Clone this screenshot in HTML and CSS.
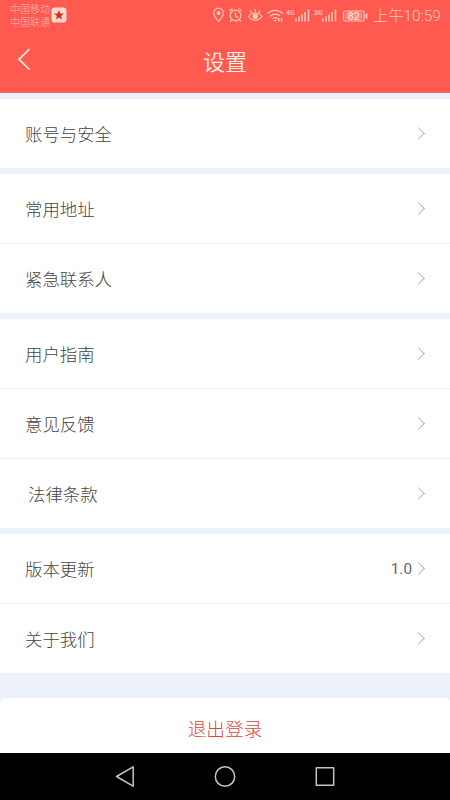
FILE: index.html
```html
<!DOCTYPE html>
<html lang="zh-CN">
<head>
<meta charset="utf-8">
<title>设置</title>
<link rel="stylesheet" href="styles.css">
</head>
<body>
<div class="screen">
  <header class="header">
    <div class="status">
      <div class="carriers"><span>中国移动</span><span>中国联通</span></div>
      <svg class="badge" width="16" height="16" viewBox="0 0 16 16"><rect x=".5" y=".5" width="15" height="15" rx="3" fill="#ffd9cc"/><path d="M8 3l1.300 3.400 3.700.2-2.900 2.300 1 3.600L8 10.500l-3.100 2 1-3.600L3 6.600l3.700-.2z" fill="#d32c20"/></svg>
      <svg class="indicators" width="156" height="20" viewBox="0 0 156 20" fill="none" stroke="#ffc9bd" stroke-width="1.2">
        <path d="M5.500 15.500C3.500 12.500.8 10.500.8 7a4.800 4.800 0 0 1 9.600 0c0 3.500-2.900 5.500-4.900 8.500z"/>
        <circle cx="5.600" cy="7" r="1.300" fill="#ffc9bd"/>
        <circle cx="22.500" cy="9.500" r="5.300"/>
        <path d="M22.500 6.500v3.500l2.500 1.500M16.500 5l3-2.500M28.500 5l-3-2.500M18.500 14l-1.500 1.700M26.500 14l1.500 1.700"/>
        <path d="M35.500 10.500c3.200-4.700 10.200-4.700 13.400 0-3.200 5-10.200 5-13.400 0zM42.200 3v3M37.200 4.500l1.500 2.500M47.200 4.500l-1.500 2.500"/>
        <circle cx="42.200" cy="10.200" r="2.200" fill="#ffc9bd"/>
        <path d="M54.500 7.500c4.300-4.300 11-4.300 15.300 0M57 10.200c3-2.900 7.300-2.900 10.200 0M59.500 12.800c1.500-1.500 3.700-1.500 5.200 0"/>
        <path d="M61.200 14.500h2.200M65.800 12v3.500M68.500 12v3.500" stroke-width="1.500"/>
        <path d="M83 13v3M86 11v5M89 9v7M92 6.500V16M95.500 4v12M110 13v3M113 11v5M116 9v7M119 6.500V16M122.500 4v12" transform="translate(0 -.5)" stroke-width="1.500"/>
        <rect x="130.600" y="5" width="20.500" height="10" rx="1.500"/>
        <path d="M153.500 7.500v5" stroke-width="1.800"/>
        <rect x="132.500" y="6.500" width="16.700" height="7" fill="#ff8a7e" stroke="none"/>
        <g class="micro" stroke="none"><text x="73" y="9">4G</text><text x="101" y="9">3G</text></g>
        <text class="charge" x="134.800" y="13.800" stroke="none">82</text>
      </svg>
      <span class="clock">上午10:59</span>
    </div>
    <div class="titlebar">
      <svg class="back" width="16" height="24" viewBox="0 0 16 24"><path d="M13.500 2L3 12.300 13.500 22.500" fill="none" stroke="#fff0e5" stroke-width="1.700"/></svg>
      <h1>设置</h1>
    </div>
  </header>
  <main class="settings">
    <section class="group">
      <div class="row"><span>账号与安全</span><i class="chevron"></i></div>
    </section>
    <section class="group">
      <div class="row"><span>常用地址</span><i class="chevron"></i></div>
      <div class="row"><span>紧急联系人</span><i class="chevron"></i></div>
    </section>
    <section class="group">
      <div class="row"><span>用户指南</span><i class="chevron"></i></div>
      <div class="row"><span>意见反馈</span><i class="chevron"></i></div>
      <div class="row indented"><span>法律条款</span><i class="chevron"></i></div>
    </section>
    <section class="group">
      <div class="row"><span>版本更新</span><span class="version">1.0</span><i class="chevron"></i></div>
      <div class="row"><span>关于我们</span><i class="chevron"></i></div>
    </section>
  </main>
  <div class="logout">退出登录</div>
  <nav class="navbar">
    <svg width="450" height="47" viewBox="0 0 450 47" fill="none" stroke="#c4c4c4" stroke-width="1.500" stroke-linejoin="round">
      <path d="M133.200 13.800v19.400L116.500 23.500z"/><circle cx="225" cy="23.500" r="9.700"/><rect x="316.300" y="14.800" width="17.400" height="17.400"/>
    </svg>
  </nav>
</div>
</body>
</html>
```
FILE: styles.css
```css
* { box-sizing: border-box; }
body {
  margin: 0;
  font-family: Roboto, "Noto Sans CJK SC", sans-serif;
  font-weight: 300;
}
.screen {
  width: 450px;
  height: 800px;
  display: flex;
  flex-direction: column;
  overflow: hidden;
  background: #ecf1fc;
}
.header {
  height: 93px;
  flex: none;
  background: #ff5a50;
  border-bottom: 1px solid #f9665e;
}
.status {
  height: 31px;
  display: flex;
  align-items: center;
  padding: 0 10px;
  color: #ffc9bd;
}
.carriers {
  display: flex;
  flex-direction: column;
  width: 41px;
  font-size: 10px;
  line-height: 13.500px;
  color: #ffb8ac;
  white-space: nowrap;
  padding-top: 1px;
}
.badge { flex: none; margin: -1px 0 0 1px; }
.indicators {
  flex: none;
  margin-left: 146px;
  margin-top: 0;
}
.micro { fill: #ffc9bd; font-size: 7px; font-weight: 500; }
.charge { fill: #fff0e9; font-size: 10.500px; font-weight: 400; }
.clock {
  margin-left: 4px;
  font-size: 15.300px;
  line-height: 20px;
  white-space: nowrap;
  font-weight: 300;
}
.titlebar {
  height: 61px;
  display: grid;
  grid-template-columns: 50px 1fr 50px;
  align-items: center;
}
.back { margin-left: 16px; margin-top: -6px; }
h1 {
  margin: 2px 0 0;
  text-align: center;
  font-size: 22px;
  line-height: 32px;
  font-weight: 350;
  color: #fff0e5;
}
.settings {
  display: flex;
  flex-direction: column;
  gap: 6px;
  padding: 6px 0 25px;
}
.group { background: #fff; }
.row {
  height: 69px;
  display: flex;
  align-items: center;
  padding: 0 24px 0 25px;
  font-size: 17.400px;
  color: #444;
}
.row + .row { height: 70px; border-top: 1px solid #eceef1; }
.row.indented { padding-left: 28px; }
.chevron {
  width: 9px;
  height: 9px;
  margin: 0 1px 0 auto;
  border: solid #b4b4b4;
  border-width: 1.300px 1.300px 0 0;
  transform: translateX(-2px) rotate(45deg);
}
.version {
  margin-left: auto;
  font-size: 15.300px;
  font-weight: 400;
  color: #666;
}
.version + .chevron { margin-left: 4px; }
.logout {
  height: 55px;
  flex: none;
  background: #fff;
  border-radius: 5px 5px 0 0;
  text-align: center;
  font-size: 18.700px;
  line-height: 65px;
  color: #dc453f;
}
.navbar { height: 47px; flex: none; background: #000; }
.navbar svg { display: block; }
```
